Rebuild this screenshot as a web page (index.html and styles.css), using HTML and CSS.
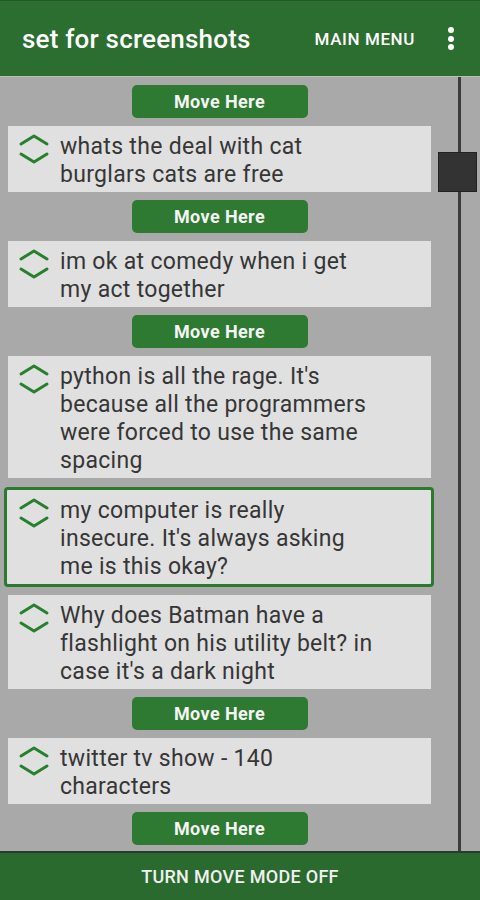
FILE: index.html
```html
<!DOCTYPE html>
<html>
<head>
<meta charset="utf-8">
<link rel="stylesheet" href="styles.css">
</head>
<body>
<div class="app">
  <header class="topbar">
    <div class="title">set for screenshots</div>
    <div class="menu-btn">MAIN MENU</div>
    <div class="overflow"><span></span><span></span><span></span></div>
  </header>
  <main class="content">
    <div class="list">
      <div class="move">Move Here</div>
      <div class="card">
        <svg class="icon" viewBox="0 0 32 30"><path d="M3 10 L16 2 L29 10"/><path d="M3 20 L16 28 L29 20"/></svg>
        <div class="text">whats the deal with cat<br>burglars cats are free</div>
      </div>
      <div class="move">Move Here</div>
      <div class="card">
        <svg class="icon" viewBox="0 0 32 30"><path d="M3 10 L16 2 L29 10"/><path d="M3 20 L16 28 L29 20"/></svg>
        <div class="text">im ok at comedy when i get<br>my act together</div>
      </div>
      <div class="move">Move Here</div>
      <div class="card">
        <svg class="icon" viewBox="0 0 32 30"><path d="M3 10 L16 2 L29 10"/><path d="M3 20 L16 28 L29 20"/></svg>
        <div class="text">python is all the rage. It's<br>because all the programmers<br>were forced to use the same<br>spacing</div>
      </div>
      <div class="card selected">
        <svg class="icon" viewBox="0 0 32 30"><path d="M3 10 L16 2 L29 10"/><path d="M3 20 L16 28 L29 20"/></svg>
        <div class="text">my computer is really<br>insecure. It's always asking<br>me is this okay?</div>
      </div>
      <div class="card">
        <svg class="icon" viewBox="0 0 32 30"><path d="M3 10 L16 2 L29 10"/><path d="M3 20 L16 28 L29 20"/></svg>
        <div class="text">Why does Batman have a<br>flashlight on his utility belt? in<br>case it's a dark night</div>
      </div>
      <div class="move">Move Here</div>
      <div class="card">
        <svg class="icon" viewBox="0 0 32 30"><path d="M3 10 L16 2 L29 10"/><path d="M3 20 L16 28 L29 20"/></svg>
        <div class="text">twitter tv show - 140<br>characters</div>
      </div>
      <div class="move">Move Here</div>
    </div>
    <div class="track">
      <div class="rail"></div>
      <div class="thumb"></div>
    </div>
  </main>
  <footer class="bottombar">TURN MOVE MODE OFF</footer>
</div>
</body>
</html>
```
FILE: styles.css
```css
* { box-sizing: border-box; }
html, body { margin: 0; padding: 0; }
body {
  font-family: Roboto, "Liberation Sans", sans-serif;
  background: #a9a9a9;
}
.app {
  width: 480px;
  height: 900px;
  display: flex;
  flex-direction: column;
  overflow: hidden;
}
.topbar {
  height: 76px;
  flex: none;
  background: #2c6e30;
  border-top: 1px solid #24582a;
  display: flex;
  align-items: center;
  padding-left: 22px;
  color: #fff;
}
.title {
  font-size: 26px;
  font-weight: 500;
  flex: 1;
  letter-spacing: 0.2px;
}
.menu-btn {
  font-size: 17px;
  font-weight: 500;
  letter-spacing: 0.6px;
  margin-right: 29px;
}
.overflow {
  width: 14px;
  margin-right: 22px;
  display: flex;
  flex-direction: column;
  align-items: center;
  gap: 2.5px;
}
.overflow span {
  width: 6px;
  height: 6px;
  border-radius: 50%;
  background: #fff;
}
.content {
  flex: 1;
  display: flex;
  min-height: 0;
  background: #a9a9a9;
  border-top: 1px solid #b8c0b8;
}
.list {
  width: 438px;
  padding: 8px 7px 0 8px;
  display: flex;
  flex-direction: column;
  gap: 8.1px;
}
.move {
  align-self: center;
  width: 176px;
  height: 33px;
  background: #2e7a32;
  border-radius: 5px;
  color: #f4f4f4;
  font-weight: 700;
  font-size: 18px;
  letter-spacing: 0.4px;
  display: flex;
  align-items: center;
  justify-content: center;
}
.card {
  background: #e0e0e0;
  display: flex;
  align-items: flex-start;
  padding: 7px 10px 3px 10px;
  gap: 10px;
}
.card.selected {
  border: 3px solid #2b7a30;
  border-radius: 4px;
  margin: 0 -3px 0 -4px;
  padding: 7px 10px 3px 11px;
}
.icon {
  width: 32px;
  height: 30px;
  flex: none;
  margin-top: 1px;
  fill: none;
  stroke: #26802e;
  stroke-width: 3;
  stroke-linecap: round;
  stroke-linejoin: round;
}
.text {
  font-size: 23px;
  line-height: 28px;
  letter-spacing: 0.3px;
  color: #363636;
  white-space: nowrap;
}
.track {
  flex: 1;
  position: relative;
  display: flex;
  justify-content: center;
}
.rail {
  width: 3px;
  background: #3c3c3c;
  margin-left: 1px;
}
.thumb {
  position: absolute;
  top: 75px;
  left: 0;
  width: 39px;
  height: 40px;
  background: #333;
  border: 1px solid #222;
}
.bottombar {
  height: 49px;
  flex: none;
  background: #2a6a2e;
  border-top: 2px solid #2a3a2c;
  color: #f0f0f0;
  font-size: 18px;
  font-weight: 500;
  letter-spacing: 0.3px;
  display: flex;
  align-items: center;
  justify-content: center;
}
```
